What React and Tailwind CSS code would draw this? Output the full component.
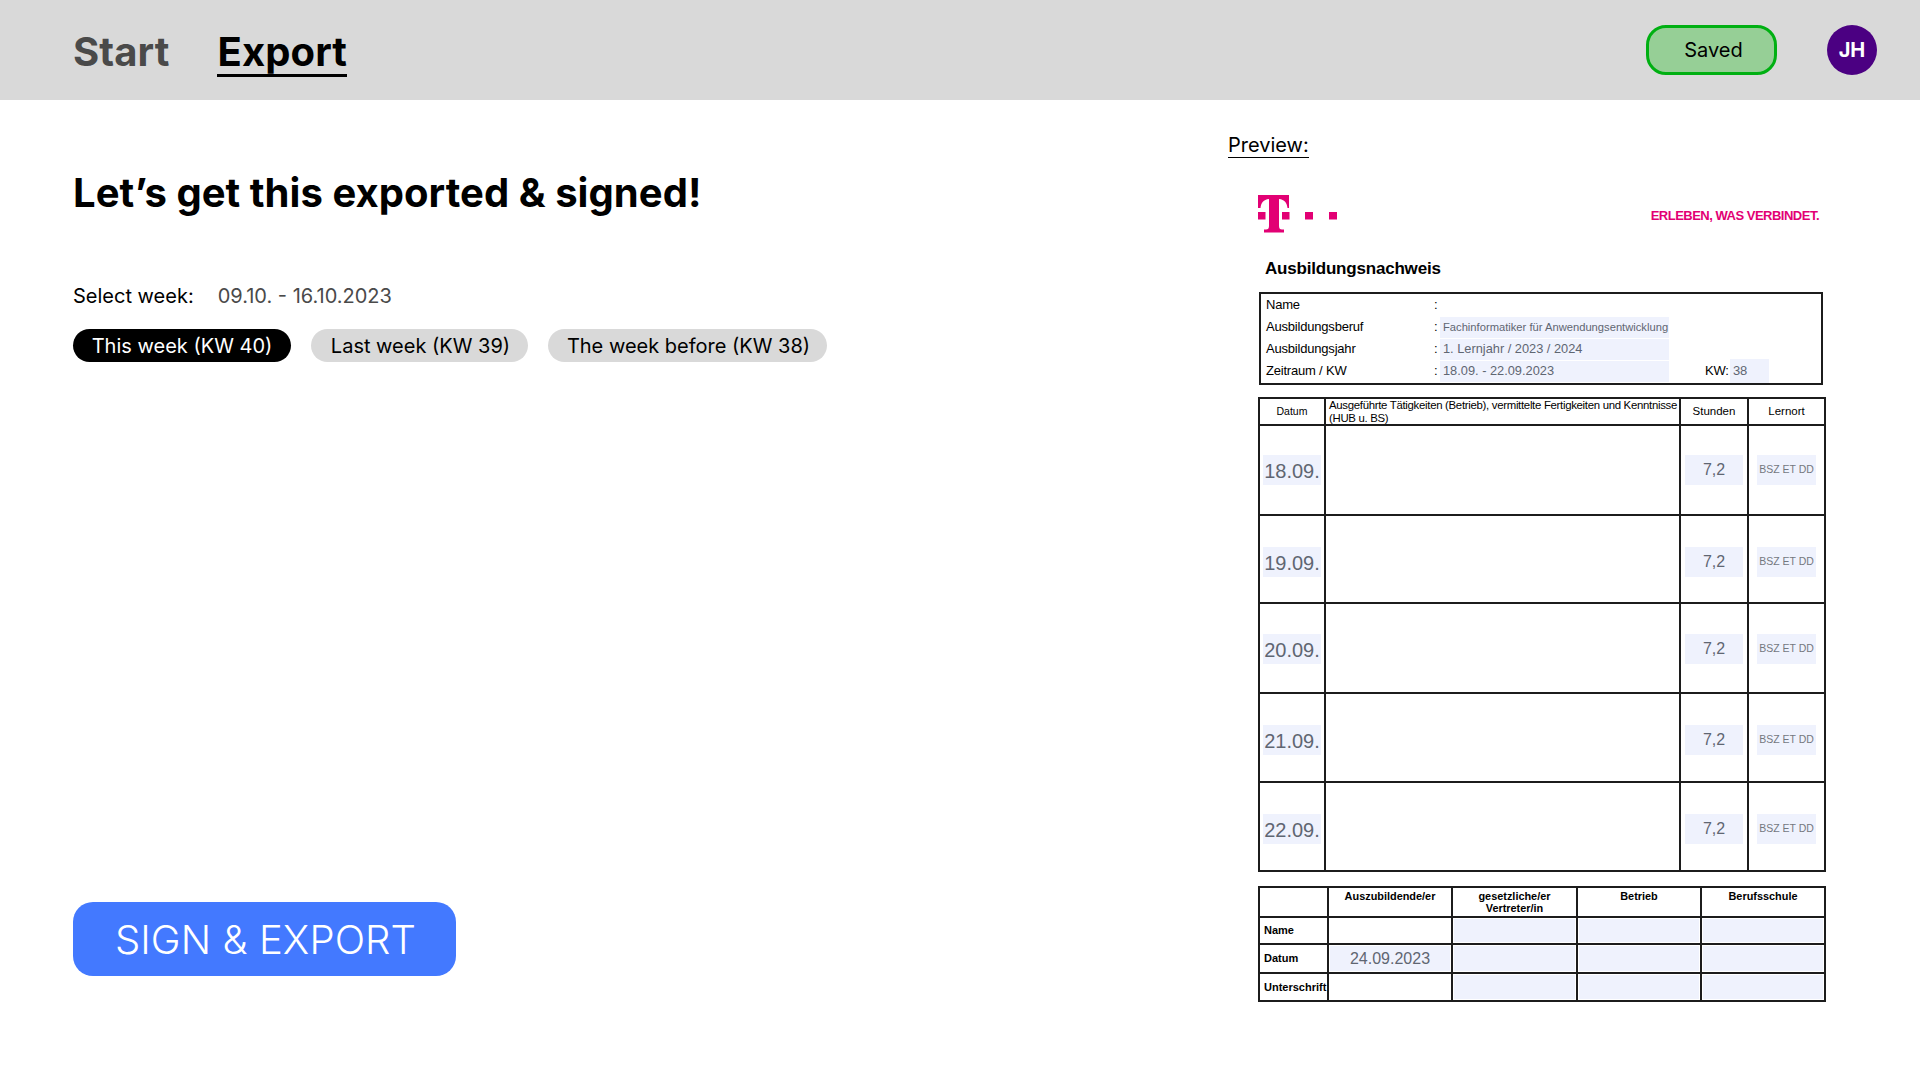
import React from 'react'

const weeks = [
  { label: 'This week (KW 40)', cls: 'w-[218px] bg-black text-white' },
  { label: 'Last week (KW 39)', cls: 'w-[217px] bg-[#d9d9d9] pl-[2px] text-black' },
  { label: 'The week before (KW 38)', cls: 'w-[279px] bg-[#d9d9d9] pl-[2px] text-black' },
]

const days = [
  { date: '18.09.', cls: 'h-[90px] border-b-2', pad: 'pt-0' },
  { date: '19.09.', cls: 'h-[88px] border-b-2', pad: 'pt-[5px]' },
  { date: '20.09.', cls: 'h-[90px] border-b-2', pad: 'pt-[2px]' },
  { date: '21.09.', cls: 'h-[89px] border-b-2', pad: 'pt-[4px]' },
  { date: '22.09.', cls: 'h-[87px]', pad: 'pt-[5px]' },
]

const info = [
  { label: 'Name', value: '', cls: 'text-[11px]' },
  { label: 'Ausbildungsberuf', value: 'Fachinformatiker für Anwendungsentwicklung', cls: 'text-[11.2px] bg-[#eff2fd]' },
  { label: 'Ausbildungsjahr', value: '1. Lernjahr / 2023 / 2024', cls: 'text-[12.8px] bg-[#eff2fd]' },
  { label: 'Zeitraum / KW', value: '18.09. - 22.09.2023', cls: 'text-[12.8px] bg-[#eff2fd]' },
]

const signRows = [
  { label: 'Name', cls: 'h-[27px] border-b-2', value: '', own: false },
  { label: 'Datum', cls: 'h-[29px] border-b-2', value: '24.09.2023', own: true },
  { label: 'Unterschrift', cls: 'h-[26px]', value: '', own: false },
]

const mainCols = 'grid grid-cols-[66px_355px_68px_75px] border-[#1c1c1c]'
const signCols = 'grid grid-cols-[69px_124px_125px_124px_122px] border-[#1c1c1c]'
const cell = 'border-r-2 border-[#1c1c1c]'

function TelekomLogo() {
  return (
    <svg width="80" height="38" viewBox="0 0 80 38" fill="#e20074">
      <path d="M0 0H31V13H29.5C29 8 26.5 4.5 21 4V31C21 33.5 22 34.5 24 34.5H26V37.5H6V34.5H8C10 34.5 11 33.5 11 31V4C5.5 4.5 3 8 2.5 13H0Z" />
      <rect x="0" y="17" width="7.5" height="7.5" />
      <rect x="24" y="17" width="7.5" height="7.5" />
      <rect x="47" y="17" width="8" height="7.5" />
      <rect x="71" y="17" width="8" height="7.5" />
    </svg>
  )
}

function Preview() {
  return (
    <div className="font-['Liberation_Sans',Arial,sans-serif] text-black">
      <div className="flex w-[600px] items-start justify-between pl-[30px] pr-[9px] pt-[37px]">
        <TelekomLogo />
        <span className="mt-[14px] text-[13px] leading-[14px] font-bold tracking-[-0.5px] text-[#e20074]">ERLEBEN, WAS VERBINDET.</span>
      </div>

      <h2 className="mt-[26px] ml-[37px] text-[17px] leading-[20px] font-bold tracking-[-0.2px]">Ausbildungsnachweis</h2>

      <div className="mt-[13px] ml-[31px] h-[93px] w-[564px] border-2 border-[#1c1c1c]">
        {info.map((row, i) => (
          <div key={row.label} className="flex h-[22px] items-center text-[13px] tracking-[-0.2px]">
            <span className="ml-[5px] w-[168px]">{row.label}</span>
            <span className="w-[6px]">:</span>
            <span className={`flex h-[21px] w-[229px] items-center pl-[3px] text-[#5f6672] tracking-normal ${row.cls}`}>{row.value}</span>
            {i === 3 && (
              <>
                <span className="ml-[36px] w-[25px] whitespace-nowrap">KW:</span>
                <span className="flex h-[24px] w-[39px] items-center bg-[#eff2fd] pl-[3px] text-[#5f6672]">38</span>
              </>
            )}
          </div>
        ))}
      </div>

      <div className="mt-[12px] ml-[30px] w-[568px] border-2 border-[#1c1c1c]">
        <div className={`${mainCols} h-[27px] border-b-2 text-[11.5px]`}>
          <div className={`${cell} flex items-center justify-center text-[10.5px]`}>Datum</div>
          <div className={`${cell} pl-[3px] text-[11.4px] leading-[13px] tracking-[-0.3px] whitespace-nowrap`}>
            Ausgeführte Tätigkeiten (Betrieb), vermittelte Fertigkeiten und Kenntnisse
            <br />
            (HUB u. BS)
          </div>
          <div className={`${cell} flex items-center justify-center`}>Stunden</div>
          <div className="flex items-center justify-center">Lernort</div>
        </div>
        {days.map((day) => (
          <div key={day.date} className={`${mainCols} ${day.cls}`}>
            <div className={`${cell} ${day.pad} flex items-center justify-center`}>
              <span className="flex h-[30px] w-[58px] items-center justify-center bg-[#eff2fd] pt-[2px] text-[20px] text-[#5f6672]">{day.date}</span>
            </div>
            <div className={cell} />
            <div className={`${cell} ${day.pad} flex items-center justify-center`}>
              <span className="flex h-[30px] w-[58px] items-center justify-center bg-[#eff2fd] text-[16px] text-[#5f6672]">7,2</span>
            </div>
            <div className={`${day.pad} flex items-center justify-center`}>
              <span className="flex h-[30px] w-[59px] items-center justify-center bg-[#eff2fd] text-[10.5px] text-[#74787f]">BSZ ET DD</span>
            </div>
          </div>
        ))}
      </div>

      <div className="mt-[14px] ml-[30px] w-[568px] border-2 border-[#1c1c1c]">
        <div className={`${signCols} h-[30px] border-b-2 text-center text-[10.9px] leading-[12px] font-bold`}>
          <div className={cell} />
          <div className={`${cell} pt-[2px]`}>Auszubildende/er</div>
          <div className={`${cell} pt-[2px]`}>gesetzliche/er<br />Vertreter/in</div>
          <div className={`${cell} pt-[2px]`}>Betrieb</div>
          <div className="pt-[2px]">Berufsschule</div>
        </div>
        {signRows.map((row) => (
          <div key={row.label} className={`${signCols} ${row.cls}`}>
            <div className={`${cell} flex items-center pl-[4px] text-[11px] font-bold whitespace-nowrap`}>{row.label}</div>
            <div className={`${cell} p-px`}>
              <div className={`flex h-full items-center justify-center text-[16px] text-[#5f6672] ${row.own ? 'bg-[#eff2fd]' : ''}`}>{row.value}</div>
            </div>
            <div className={`${cell} p-px`}><div className="h-full bg-[#eff2fd]" /></div>
            <div className={`${cell} p-px`}><div className="h-full bg-[#eff2fd]" /></div>
            <div className="p-px"><div className="h-full bg-[#eff2fd]" /></div>
          </div>
        ))}
      </div>
    </div>
  )
}

export default function App() {
  return (
    <div className="flex h-screen flex-col overflow-hidden bg-white font-['Inter',sans-serif] text-black">
      <header className="flex h-[100px] shrink-0 items-center bg-[#d9d9d9] pl-[73px] pr-[43px]">
        <nav className="mt-[3px] flex gap-[48px] text-[40px] leading-[44px] font-bold tracking-[0.1px]">
          <a className="border-b-[3px] border-transparent pt-[4px] text-[#4a4a4a]">Start</a>
          <a className="border-b-[3px] border-black pt-[4px]">Export</a>
        </nav>
        <button className="ml-auto flex h-[50px] w-[131px] items-center justify-center rounded-[20px] border-[3px] border-[#00b012] bg-[#96cf96] pl-[4px] text-[20px]">Saved</button>
        <div className="ml-[50px] flex h-[50px] w-[50px] items-center justify-center rounded-full bg-[#4b0082] text-[20px] font-bold text-white">JH</div>
      </header>

      <main className="flex min-h-0 flex-1">
        <section className="flex flex-1 flex-col pl-[73px] pb-[104px]">
          <h1 className="mt-[69px] text-[40px] leading-[48px] font-bold tracking-[0.05px]">Let’s get this exported &amp; signed!</h1>
          <div className="mt-[67px] flex gap-[24px] text-[20px] leading-[24px]">
            <span>Select week:</span>
            <span className="text-[#4a4a4a]">09.10. - 16.10.2023</span>
          </div>
          <div className="mt-[21px] flex gap-[20px]">
            {weeks.map((w) => (
              <button key={w.label} className={`flex h-[33px] items-center justify-center rounded-full text-[20px] ${w.cls}`}>{w.label}</button>
            ))}
          </div>
          <button className="mt-auto h-[74px] w-[383px] rounded-[20px] bg-[#4379ff] pt-[2px] pl-[2px] text-[40px] font-light tracking-[0.1px] text-white">SIGN &amp; EXPORT</button>
        </section>

        <aside className="w-[692px] shrink-0">
          <p className="mt-[33px] w-fit border-b border-black text-[20px] leading-[24px]">Preview:</p>
          <Preview />
        </aside>
      </main>
    </div>
  )
}
